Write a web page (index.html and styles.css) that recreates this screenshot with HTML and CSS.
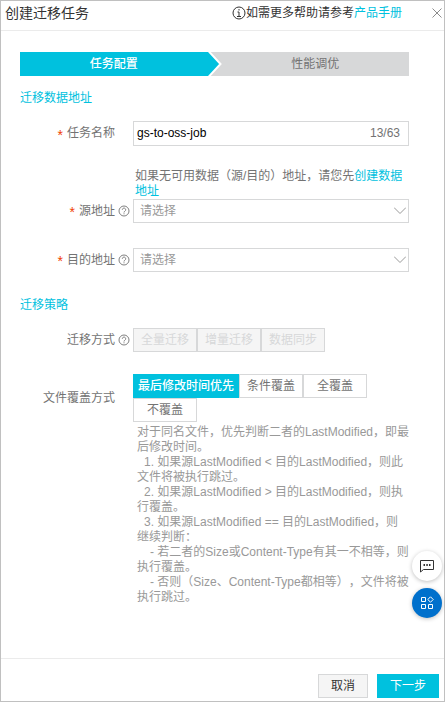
FILE: index.html
```
<!DOCTYPE html>
<html lang="zh-CN">
  <head>
    <meta charset="UTF-8" />
    <meta name="viewport" content="width=device-width, initial-scale=1.0" />
    <title>创建迁移任务</title>
    <link rel="stylesheet" href="styles.css">
  </head>
  <body>
    <header class="header">
      <h1>创建迁移任务</h1>
      <p class="header-help">
        <svg class="info" viewBox="0 0 14 14" width="14" height="14">
          <circle cx="7" cy="7" r="6" />
          <path d="M7 3v1.5M5.5 6H7v4.5M5 10.5h4" />
        </svg>如需更多帮助请参考<a href="#">产品手册</a>
      </p>
      <button type="button" class="close" aria-label="关闭">
        <svg viewBox="0 0 10 10" width="10" height="10">
          <path d="M.5.5l9 9M9.5.5l-9 9" />
        </svg>
      </button>
    </header>

    <form class="form" id="job">
      <div class="steps">
        <span class="step active">任务配置</span>
        <svg class="arrow" viewBox="0 0 14 24" width="14" height="24">
          <path class="arrow-bg" d="M0 0h14v24H0z" />
          <path class="arrow-head" d="M-2 -1.5L0 -1.5L12.5 12L0 25.5h-2z" />
        </svg>
        <span class="step">性能调优</span>
      </div>

      <h2>迁移数据地址</h2>
      <div class="row">
        <label class="label required" for="name">任务名称</label>
        <div class="text-box">
          <input type="text" id="name" name="name" maxlength="63" value="gs-to-oss-job" />
          <span>13/63</span>
        </div>
      </div>
      <p class="hint">如果无可用数据（源/目的）地址，请您先<a href="#">创建数据地址</a></p>
      <div class="row">
        <label class="label required with-help" for="source">源地址
          <svg class="help" viewBox="0 0 12 12" width="12" height="12">
            <circle cx="6" cy="6" r="5" />
            <path d="M4.3 4.8a1.7 1.7 0 1 1 2.6 1.4C6.2 6.6 6 6.9 6 7.5M6 8.3v1" />
          </svg>
        </label>
        <div class="select">
          <select id="source" name="source">
            <option>请选择</option>
          </select>
          <svg viewBox="0 0 12 7" width="12" height="7"><path d="M0 .5l6 6 6-6" /></svg>
        </div>
      </div>
      <div class="row">
        <label class="label required with-help" for="target">目的地址
          <svg class="help" viewBox="0 0 12 12" width="12" height="12">
            <circle cx="6" cy="6" r="5" />
            <path d="M4.3 4.8a1.7 1.7 0 1 1 2.6 1.4C6.2 6.6 6 6.9 6 7.5M6 8.3v1" />
          </svg>
        </label>
        <div class="select">
          <select id="target" name="target">
            <option>请选择</option>
          </select>
          <svg viewBox="0 0 12 7" width="12" height="7"><path d="M0 .5l6 6 6-6" /></svg>
        </div>
      </div>

      <h2>迁移策略</h2>
      <div class="row radio-row" role="radiogroup" aria-labelledby="mode-label">
        <span class="label with-help" id="mode-label">迁移方式
          <svg class="help" viewBox="0 0 12 12" width="12" height="12">
            <circle cx="6" cy="6" r="5" />
            <path d="M4.3 4.8a1.7 1.7 0 1 1 2.6 1.4C6.2 6.6 6 6.9 6 7.5M6 8.3v1" />
          </svg>
        </span>
        <div class="options">
          <label class="option"><input type="radio" name="mode" value="full" disabled /><span>全量迁移</span></label>
          <label class="option"><input type="radio" name="mode" value="increment" disabled /><span>增量迁移</span></label>
          <label class="option"><input type="radio" name="mode" value="sync" disabled /><span>数据同步</span></label>
        </div>
      </div>
      <div class="row radio-row" role="radiogroup" aria-labelledby="cover-label">
        <span class="label" id="cover-label">文件覆盖方式</span>
        <div class="options">
          <label class="option"><input type="radio" name="cover" value="latest" checked /><span>最后修改时间优先</span></label>
          <label class="option"><input type="radio" name="cover" value="condition" /><span>条件覆盖</span></label>
          <label class="option"><input type="radio" name="cover" value="all" /><span>全覆盖</span></label>
          <label class="option"><input type="radio" name="cover" value="none" /><span>不覆盖</span></label>
        </div>
      </div>
      <div class="rules">
        <p>对于同名文件，优先判断二者的LastModified，即最后修改时间。</p>
        <p class="rule">1. 如果源LastModified &lt; 目的LastModified，则此<br />文件将被执行跳过。</p>
        <p class="rule">2. 如果源LastModified &gt; 目的LastModified，则执<br />行覆盖。</p>
        <p class="rule">3. 如果源LastModified == 目的LastModified，则<br />继续判断：</p>
        <p class="sub-rule">- 若二者的Size或Content-Type有其一不相等，则<br />执行覆盖。</p>
        <p class="sub-rule">- 否则（Size、Content-Type都相等），文件将被<br />执行跳过。</p>
      </div>
    </form>

    <footer class="footer">
      <button type="button" class="cancel">取消</button>
      <button type="submit" class="next" form="job">下一步</button>
    </footer>

    <div class="float">
      <button type="button" class="chat" aria-label="咨询">
        <svg viewBox="0 0 14 14" width="14" height="14">
          <path d="M.5 1.5h13v9h-10L.5 13z" />
          <path class="dots" d="M3.5 6H5M6.3 6h1.5M9 6h1.5" />
        </svg>
      </button>
      <button type="button" class="apps" aria-label="应用">
        <svg viewBox="0 0 14 14" width="14" height="14">
          <path d="M1.500 1.500h4v4h-4zM1.500 8.500h4v4h-4zM8.500 8.500h4v4h-4zM10.500 .8l2.700 2.700-2.700 2.700-2.700-2.700z" />
        </svg>
      </button>
    </div>
  </body>
</html>
```
FILE: styles.css
```
* {
  box-sizing: border-box;
}

body {
  display: flex;
  flex-direction: column;
  min-height: 100vh;
  margin: 0;
  border: 1px solid #c0c0c0;
  background-color: #fff;
  color: #737373;
  font-family: "Liberation Sans", "Noto Sans CJK SC", sans-serif;
  font-size: 12px;
  line-height: 15px;
  text-spacing-trim: space-all;
}

h1,
h2,
p {
  margin: 0;
  font-weight: normal;
}

a {
  color: #00c1de;
  text-decoration: none;
}

button,
input,
select {
  margin: 0;
  font: inherit;
}

svg {
  flex: none;
  fill: none;
  stroke: currentColor;
}

/* header */
.header {
  display: flex;
  align-items: center;
  height: 30px;
  padding: 0 2px 5px 4px;
  border-bottom: 1px solid #ebebeb;
  color: #333;
}

.header h1 {
  flex: 1;
  font-size: 14px;
}

.header-help {
  display: flex;
  align-items: center;
}

.close {
  display: flex;
  margin-left: 30px;
  padding: 0;
  border: none;
  background: none;
  color: #8c8c8c;
}

/* form */
.form {
  flex: 1;
  padding: 21px 35px 48px 19px;
}

.steps {
  display: flex;
  margin-bottom: 14px;
}

.step {
  flex: 1;
  background-color: #d7d8d9;
  line-height: 24px;
  text-align: center;
}

.step.active {
  background-color: #00c1de;
  color: #fff;
  font-weight: 500;
}

.arrow-bg {
  fill: #d7d8d9;
  stroke: none;
}

.arrow-head {
  fill: #00c1de;
  stroke: #fff;
  stroke-width: 2;
}

h2 {
  margin-bottom: 15px;
  padding-top: 1px;
  color: #00c1de;
  font-size: 12px;
}

.row {
  display: grid;
  grid-template-columns: 113px 1fr;
  align-items: center;
  margin-bottom: 25px;
}

.radio-row {
  margin-bottom: 22px;
}

.label {
  display: flex;
  align-items: center;
  justify-content: flex-end;
  padding-right: 18px;
}

.label.with-help {
  gap: 3px;
  padding-right: 3px;
}

.required::before {
  content: "*";
  margin-right: 4px;
  padding-top: 2px;
  color: #f04000;
  font-size: 14px;
  line-height: 12px;
}

.with-help.required::before {
  margin-right: 1px;
}

.help {
  color: #808080;
}

.text-box {
  display: flex;
  align-items: center;
  height: 25px;
  padding: 0 8px 0 3px;
  border: 1px solid #d7d8d9;
}

.text-box input {
  flex: 1;
  min-width: 0;
  padding: 0;
  border: none;
  outline: none;
  color: #000;
}

.hint {
  margin: -3px 0 0 113px;
  padding: 1px 0 0 2px;
}

.select {
  position: relative;
}

.select select {
  display: block;
  width: 100%;
  height: 24px;
  padding: 0 24px 0 6px;
  border: 1px solid #d7d8d9;
  border-radius: 0;
  background-color: #fff;
  color: #999;
  appearance: none;
}

.select svg {
  position: absolute;
  top: 8px;
  right: 3px;
  color: #999;
  pointer-events: none;
}

.options {
  display: flex;
  flex-wrap: wrap;
}

.option {
  position: relative;
}

.option input {
  position: absolute;
  opacity: 0;
}

.option span {
  display: block;
  min-width: 64px;
  padding: 0 4px;
  border: 1px solid #d7d8d9;
  line-height: 22px;
  text-align: center;
}

.option input:checked + span {
  border-color: #00c1de;
  background-color: #00c1de;
  color: #fff;
  font-weight: 500;
}

.option input:disabled + span {
  background-color: #f5f5f5;
  color: #d7d8d9;
}

.rules {
  margin: -19px -4px 0 113px;
  padding-left: 4px;
  color: #999;
}

.rule {
  text-indent: 7px;
}

.sub-rule {
  text-indent: 13px;
}

/* footer */
.footer {
  display: flex;
  justify-content: flex-end;
  gap: 9px;
  padding: 15px 5px 3px;
  border-top: 1px solid #ebebeb;
}

.footer button {
  height: 24px;
  padding: 0 12px;
  border: 1px solid #d7d8d9;
  background-color: #f5f5f5;
  color: #333;
}

.footer .next {
  border-color: #00c1de;
  background-color: #00c1de;
  color: #fff;
}

/* buttons floating over the page */
.float {
  position: fixed;
  right: 3px;
  bottom: 84px;
  display: flex;
  flex-direction: column;
  gap: 7px;
}

.float button {
  display: flex;
  align-items: center;
  justify-content: center;
  width: 30px;
  height: 30px;
  padding: 0;
  border: none;
  border-radius: 50%;
  box-shadow: 0 1px 4px rgba(0, 0, 0, 0.25);
}

.float .chat {
  background-color: #fff;
  color: #333;
}

.float .apps {
  background-color: #0070cc;
  color: #fff;
}

.dots {
  stroke-width: 2;
}
```
